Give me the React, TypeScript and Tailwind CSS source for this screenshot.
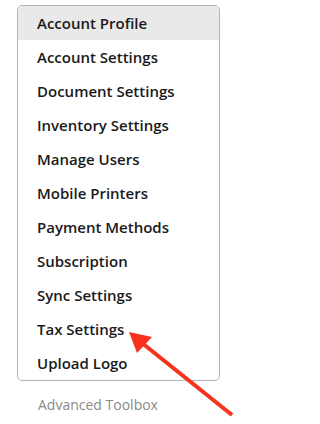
import React from "react";

const items = [
  "Account Profile",
  "Account Settings",
  "Document Settings",
  "Inventory Settings",
  "Manage Users",
  "Mobile Printers",
  "Payment Methods",
  "Subscription",
  "Sync Settings",
  "Tax Settings",
  "Upload Logo",
];

export default function App() {
  return (
    <div
      className="relative w-[240px] h-[424px] bg-white overflow-hidden"
      style={{ fontFamily: '"Open Sans", sans-serif' }}
    >
      <div className="pt-[5px] pl-[17px]">
        <div className="w-[203px] border border-[#b4b4b4] rounded-[5px] overflow-hidden">
          {items.map((t, i) => (
            <div
              key={t}
              className={`h-[34px] flex items-center pl-[19px] text-[15px] font-[550] text-[#1a1a1a] ${
                i === 0 ? "bg-[#e9e9e9]" : ""
              }`}
            >
              {t}
            </div>
          ))}
        </div>
        <div className="pl-[21px] pt-[13px] text-[14px] text-[#8a8a8a]">
          Advanced Toolbox
        </div>
      </div>
      <svg
        className="absolute left-0 top-0"
        width="240"
        height="424"
        viewBox="0 0 240 424"
      >
        <line
          x1="232"
          y1="415"
          x2="142"
          y2="343"
          stroke="#f8321e"
          strokeWidth="4"
          strokeLinecap="butt"
        />
        <polygon points="129,332 152,337 137,353" fill="#f8321e" />
      </svg>
    </div>
  );
}
